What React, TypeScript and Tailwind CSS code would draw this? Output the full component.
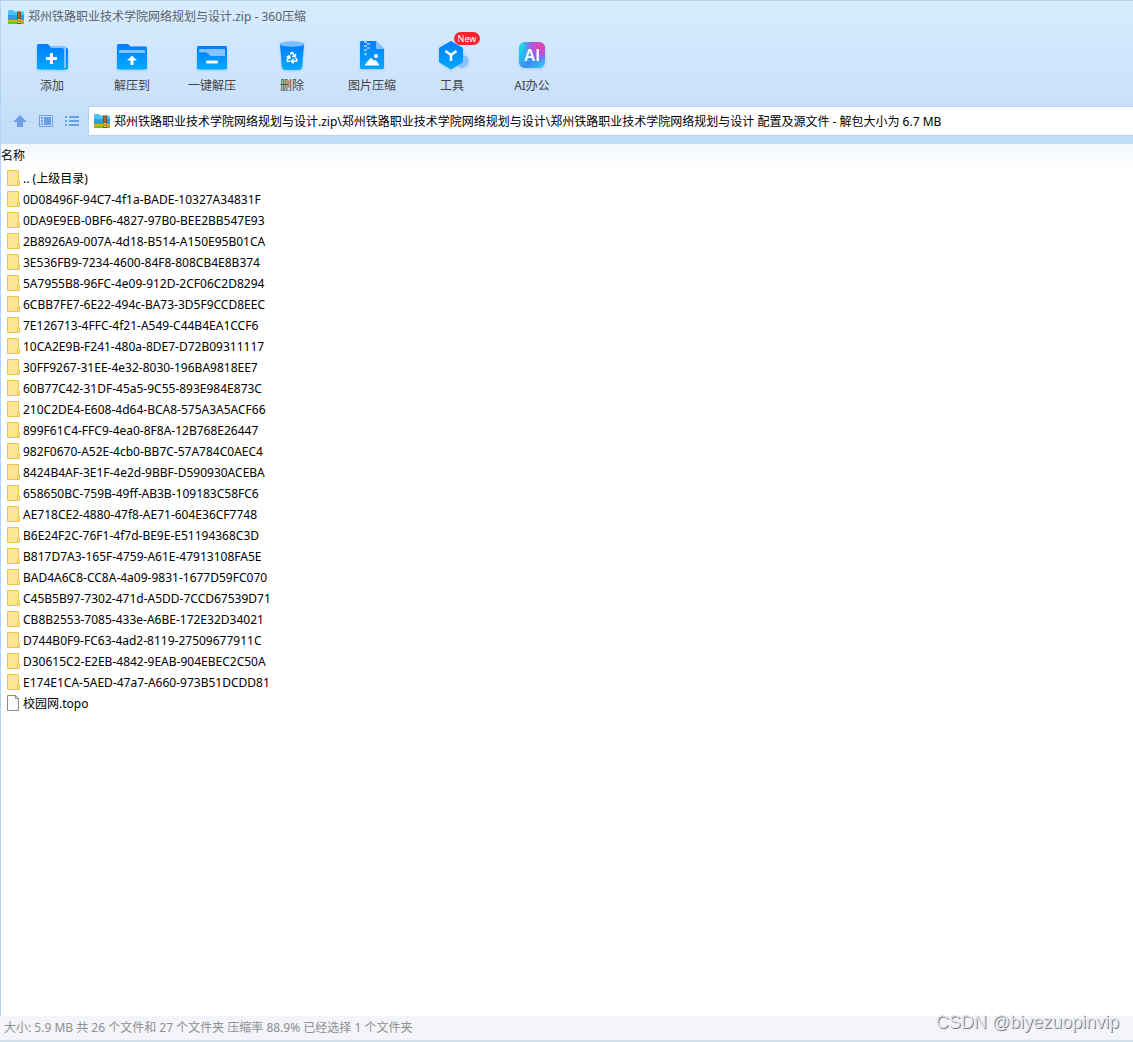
import type { ReactNode } from "react";
import { Recycle } from "lucide-react";

const archiveName = "郑州铁路职业技术学院网络规划与设计";
const archivePath = `${archiveName}.zip\\${archiveName}\\${archiveName} 配置及源文件 - 解包大小为 6.7 MB`;

interface Entry {
  name: string;
  kind: "folder" | "file";
}

const folderNames = [
  ".. (上级目录)",
  "0D08496F-94C7-4f1a-BADE-10327A34831F",
  "0DA9E9EB-0BF6-4827-97B0-BEE2BB547E93",
  "2B8926A9-007A-4d18-B514-A150E95B01CA",
  "3E536FB9-7234-4600-84F8-808CB4E8B374",
  "5A7955B8-96FC-4e09-912D-2CF06C2D8294",
  "6CBB7FE7-6E22-494c-BA73-3D5F9CCD8EEC",
  "7E126713-4FFC-4f21-A549-C44B4EA1CCF6",
  "10CA2E9B-F241-480a-8DE7-D72B09311117",
  "30FF9267-31EE-4e32-8030-196BA9818EE7",
  "60B77C42-31DF-45a5-9C55-893E984E873C",
  "210C2DE4-E608-4d64-BCA8-575A3A5ACF66",
  "899F61C4-FFC9-4ea0-8F8A-12B768E26447",
  "982F0670-A52E-4cb0-BB7C-57A784C0AEC4",
  "8424B4AF-3E1F-4e2d-9BBF-D590930ACEBA",
  "658650BC-759B-49ff-AB3B-109183C58FC6",
  "AE718CE2-4880-47f8-AE71-604E36CF7748",
  "B6E24F2C-76F1-4f7d-BE9E-E51194368C3D",
  "B817D7A3-165F-4759-A61E-47913108FA5E",
  "BAD4A6C8-CC8A-4a09-9831-1677D59FC070",
  "C45B5B97-7302-471d-A5DD-7CCD67539D71",
  "CB8B2553-7085-433e-A6BE-172E32D34021",
  "D744B0F9-FC63-4ad2-8119-27509677911C",
  "D30615C2-E2EB-4842-9EAB-904EBEC2C50A",
  "E174E1CA-5AED-47a7-A660-973B51DCDD81",
];

const entries: Entry[] = [
  ...folderNames.map((name): Entry => ({ name, kind: "folder" })),
  { name: "校园网.topo", kind: "file" },
];

const ArchiveIcon = () => (
  <svg width="16" height="14" viewBox="0 0 16 14" className="shrink-0" aria-hidden="true">
    <path d="M0 1a1 1 0 0 1 1-1h4l1.500 1.500H15a1 1 0 0 1 1 1V10H0z" fill="#4cc3f2" />
    <path d="M0 5h16v5H0z" fill="#2b9ee8" />
    <path d="M0 10h16v2H0z" fill="#f7a21b" />
    <path d="M0 12h16v1a1 1 0 0 1-1 1H1a1 1 0 0 1-1-1z" fill="#6fbf2b" />
    <path d="M9 1.500h4V14H9z" fill="#8a4416" />
    <path d="M10 2h1v1h-1zM11 3h1v1h-1zM10 4h1v1h-1zM11 5h1v1h-1zM10 6h1v1h-1zM11 7h1v1h-1z" fill="#c98a4a" />
    <path d="M9.500 9h3v4h-3z" fill="#ffd24a" />
    <path d="M10.500 10h1v2h-1z" fill="#8a4416" />
  </svg>
);

const FolderIcon = () => (
  <svg width="13" height="17" viewBox="0 0 13 17" className="shrink-0" aria-hidden="true">
    <path d="M.5.5h11v9.500l1 1v4.500H.5z" fill="#ffe596" stroke="#ecc74e" />
    <path d="M10.500 15.500V11l1-1" fill="none" stroke="#ecc74e" />
  </svg>
);

const FileIcon = () => (
  <svg width="13" height="17" viewBox="0 0 13 17" className="shrink-0" aria-hidden="true">
    <path d="M.5.5h8l3 3v12H.5z" fill="#fafafa" stroke="#8c8c8c" />
    <path d="M8.500.5v3h3" fill="none" stroke="#8c8c8c" />
  </svg>
);

const ToolIcon = ({ children }: { children: ReactNode }) => (
  <svg
    width="34"
    height="32"
    viewBox="0 0 34 32"
    aria-hidden="true"
    className="drop-shadow-[0_1px_1px_rgba(60,140,230,0.3)]"
  >
    {children}
  </svg>
);

const AddIcon = () => (
  <ToolIcon>
    <path d="M30 8h1.500q1.500 0 1.500 1.500V28q0 1.500-1.500 1.500H20V8z" fill="url(#blue)" />
    <path d="M14 6h15.500q1.500 0 1.500 1.500V27q0 1-1 1h-2z" fill="#84c3ff" />
    <path d="M2 5.500Q2 4 3.500 4H12q1 0 1.500.5L16 8h11q2 0 2 2v19.500H3.500Q2 29.500 2 28z" fill="url(#blue)" />
    <path d="M15 13h3v4h4v3h-4v4h-3v-4h-4v-3h4z" fill="#fff" />
  </ToolIcon>
);

const ExtractIcon = () => (
  <ToolIcon>
    <path d="M2 5.500Q2 4 3.500 4H12q1 0 1.500.5L15.500 6.500h15q1.500 0 1.500 1.500V28q0 1.500-1.500 1.500h-27Q2 29.500 2 28z" fill="url(#blue)" />
    <path d="M4 13v-2q0-1 1-1h24q1 0 1 1v2z" fill="#84c3ff" />
    <path d="M17 15.500l5 5h-3.500V25h-3v-4.500H12z" fill="#fff" />
  </ToolIcon>
);

const QuickExtractIcon = () => (
  <ToolIcon>
    <rect x="2" y="6" width="30" height="23.500" rx="1.500" fill="url(#blue)" />
    <path d="M4 10q0-1 1-1h24q1 0 1 1v6H17q-1.500 0-2.500-1L12 13q-.8-.8-2-.8H4z" fill="#84c3ff" />
    <rect x="11" y="20.500" width="12" height="3" rx="1" fill="#fff" />
  </ToolIcon>
);

const DeleteIcon = () => (
  <ToolIcon>
    <path d="M5 4h24l-1.800 23q-.2 3-5.200 3H12q-5 0-5.200-3z" fill="url(#blue)" />
    <ellipse cx="17" cy="4" rx="12" ry="2.800" fill="#7cc0ff" />
    <Recycle x="10.500" y="11" width="13" height="13" color="#fff" strokeWidth={3} />
  </ToolIcon>
);

const PictureIcon = () => (
  <ToolIcon>
    <path d="M5 2.500Q5 1 6.500 1H21l8 8v18.500q0 1.500-1.500 1.500h-21Q5 29 5 27.500z" fill="url(#blue)" />
    <path d="M21 1l8 8h-6.500Q21 9 21 7.500z" fill="#84c3ff" />
    <path d="M9 1h3v2H9zM12 3h3v2h-3zM9 5h3v2H9zM12 7h3v2h-3zM9 9h3v2H9z" fill="#84c3ff" />
    <circle cx="10.500" cy="14" r="1.500" fill="#84c3ff" />
    <circle cx="21" cy="16" r="2" fill="#fff" />
    <path d="M10 25.500q0-1 .6-1.800L15 18.500q1-1.200 2 0l2 2.500q1-1.500 2-.5l2.500 3q.5.800.5 2z" fill="#fff" />
  </ToolIcon>
);

const BoxIcon = () => (
  <ToolIcon>
    <path d="M26 14l7 3v7.500l-6.500 3.500-6.500-3.500z" fill="#84c3ff" />
    <path d="M16 1.500l11.500 6.500v14L16 29 4.500 22V8z" fill="url(#blue)" stroke="url(#blue)" strokeLinejoin="round" />
    <path d="M10.500 11l5.500 4 5.500-4M16 15v6" fill="none" stroke="#fff" strokeWidth="2.500" />
  </ToolIcon>
);

const AiIcon = () => (
  <ToolIcon>
    <rect x="4" y="2" width="26" height="26" rx="6" fill="url(#ai)" />
    <rect x="4" y="2" width="26" height="26" rx="6" fill="url(#aiPink)" />
    <text x="17" y="21" textAnchor="middle" fontSize="16" fontWeight="700" fill="#fff" fontFamily="Liberation Sans, sans-serif">
      AI
    </text>
  </ToolIcon>
);

const tools = [
  { label: "添加", icon: <AddIcon /> },
  { label: "解压到", icon: <ExtractIcon /> },
  { label: "一键解压", icon: <QuickExtractIcon /> },
  { label: "删除", icon: <DeleteIcon /> },
  { label: "图片压缩", icon: <PictureIcon /> },
  { label: "工具", icon: <BoxIcon />, badge: "New" },
  { label: "AI办公", icon: <AiIcon /> },
];

const GradientDefs = () => (
  <svg width="0" height="0" className="absolute" aria-hidden="true">
    <defs>
      <linearGradient id="blue" x1="0" y1="0" x2="0" y2="1">
        <stop offset="0" stopColor="#007cff" />
        <stop offset="1" stopColor="#00a9ff" />
      </linearGradient>
      <linearGradient id="ai" x1="0" y1="0" x2="1" y2="1">
        <stop offset="0.150" stopColor="#18d8ea" />
        <stop offset="0.600" stopColor="#3b8cf2" />
        <stop offset="1" stopColor="#2fd3f5" />
      </linearGradient>
      <radialGradient id="aiPink" cx="0.800" cy="0.150" r="0.700">
        <stop offset="0" stopColor="#f0409c" />
        <stop offset="0.500" stopColor="#c04be8" stopOpacity="0.850" />
        <stop offset="1" stopColor="#6a7cf5" stopOpacity="0" />
      </radialGradient>
    </defs>
  </svg>
);

const AddressBar = () => (
  <div className="flex h-[30px] items-center pl-[6px]">
    <button type="button" aria-label="上级目录" className="flex h-6 w-[26px] items-center justify-center">
      <svg width="14" height="12" viewBox="0 0 14 12" fill="#6a9fe8">
        <path d="M7 0l7 7h-4v5H4V7H0z" />
      </svg>
    </button>
    <button type="button" aria-label="预览" className="flex h-6 w-[26px] items-center justify-center">
      <svg width="14" height="12" viewBox="0 0 14 12">
        <path d="M.5.5h13v11H.5z" fill="none" stroke="#6a9fe8" />
        <path d="M2 2h2v2H2zM2 5h2v2H2zM2 8h2v2H2zM5 2h7v8H5z" fill="#6a9fe8" />
      </svg>
    </button>
    <button type="button" aria-label="列表" className="flex h-6 w-[26px] items-center justify-center">
      <svg width="14" height="12" viewBox="0 0 14 12" fill="#6a9fe8">
        <path d="M0 1h2v2H0zM0 5h2v2H0zM0 9h2v2H0zM4 1h10v2H4zM4 5h10v2H4zM4 9h10v2H4z" />
      </svg>
    </button>
    <label className="ml-[3px] flex h-[30px] flex-1 items-center gap-1 border border-r-0 border-[#b6d3f2] bg-white pl-[5px]">
      <ArchiveIcon />
      <input
        type="text"
        aria-label="路径"
        defaultValue={archivePath}
        className="h-6 min-w-0 flex-1 bg-transparent text-xs text-black outline-none"
      />
    </label>
  </div>
);

const EntryTable = () => (
  <table className="w-full border-collapse text-left text-xs text-black">
    <thead>
      <tr className="h-6 bg-linear-to-b from-[#f2f8ff] to-white">
        <th className="p-0 font-normal">名称</th>
      </tr>
    </thead>
    <tbody>
      {entries.map((entry) => (
        <tr key={entry.name}>
          <td className="p-0 pl-[6px]">
            <div className="flex h-[21px] items-center gap-[3px] whitespace-nowrap">
              {entry.kind === "folder" ? <FolderIcon /> : <FileIcon />}
              <span>{entry.name}</span>
            </div>
          </td>
        </tr>
      ))}
    </tbody>
  </table>
);

export default function App() {
  return (
    <div className="flex min-h-screen flex-col bg-white font-['Noto_Sans','Noto_Sans_CJK_SC',sans-serif]">
      <GradientDefs />
      <div className="flex flex-1 flex-col border-l border-[#b4d2f2]">
        <header className="border-t border-[#b4d2f2] bg-linear-to-b from-[#d8ecff] to-[#c2dcf8] pb-2">
          <div className="flex h-8 items-center gap-1 pl-[7px]">
            <ArchiveIcon />
            <h1 className="text-xs text-[#5a6068]">{archiveName}.zip - 360压缩</h1>
          </div>
          <nav className="flex h-[73px] pt-[7px] pl-[11px]">
            {tools.map((tool) => (
              <button key={tool.label} type="button" className="relative flex w-20 flex-col items-center gap-1">
                {tool.icon}
                <span className="text-xs leading-5 text-[#444]">{tool.label}</span>
                {tool.badge ? (
                  <span className="absolute -top-2 right-3 flex h-[13px] w-[26px] items-center justify-center rounded-full bg-[#f9222e] text-[9px] leading-3 text-white">
                    {tool.badge}
                  </span>
                ) : null}
              </button>
            ))}
          </nav>
          <AddressBar />
        </header>
        <main className="flex-1">
          <EntryTable />
        </main>
      </div>
      <footer className="flex h-[26px] items-start justify-between border-b-2 border-[#cfe0e9] bg-[#f4f5fa] pr-[14px] pl-1">
        <p className="self-center text-xs text-[#8f8f8f]">
          大小: 5.9 MB 共 26 个文件和 27 个文件夹 压缩率 88.9% 已经选择 1 个文件夹
        </p>
        <span className="font-['Liberation_Sans',sans-serif] text-lg leading-3 text-[#e6e7ec] [text-shadow:1px_1px_0_#808080]">
          CSDN @biyezuopinvip
        </span>
      </footer>
    </div>
  );
}
